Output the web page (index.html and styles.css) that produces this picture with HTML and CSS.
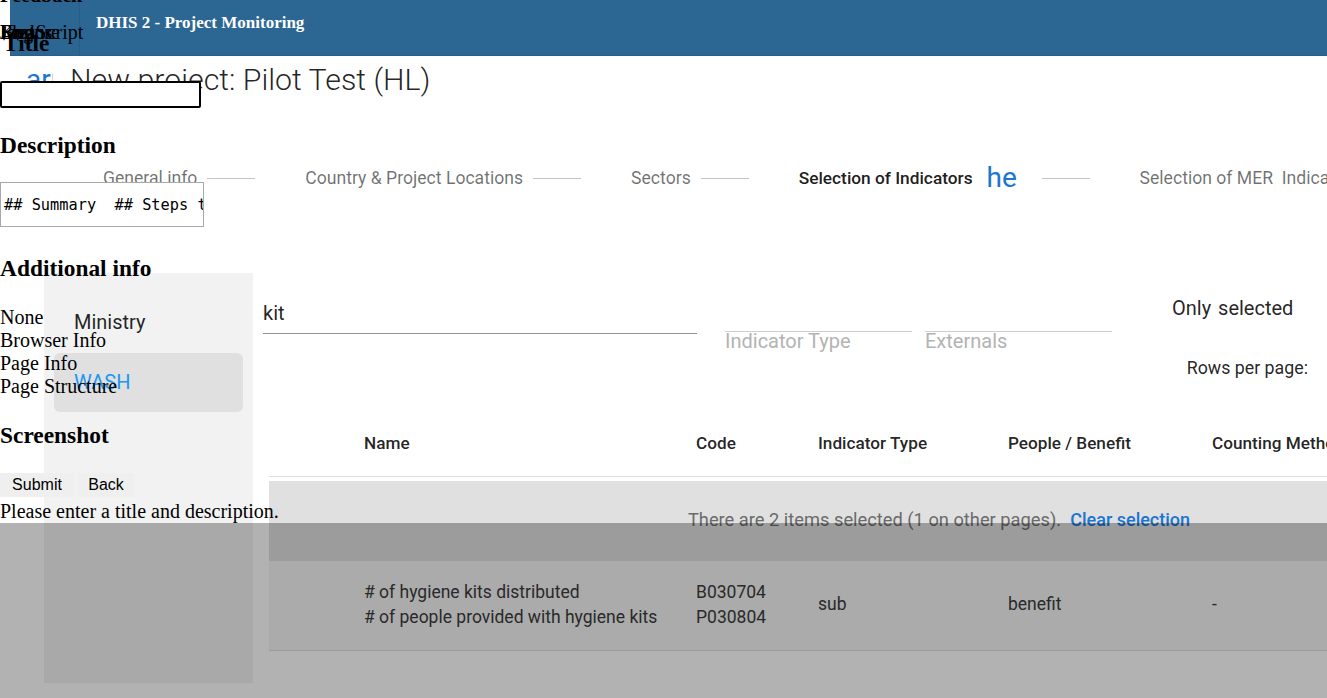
FILE: index.html
```html
<!DOCTYPE html>
<html lang="en">
<head>
<meta charset="utf-8">
<title>DHIS 2 - Project Monitoring</title>
<link rel="stylesheet" href="styles.css">
</head>
<body>
<div class="app">
  <header class="topbar">
    <div class="topbar-menu"></div>
    <div class="topbar-title">DHIS 2 - Project Monitoring</div>
  </header>

  <div class="page-head">
    <span class="icon-clip back"><span>arrow_back</span></span>
    <h1 class="page-title">New project: Pilot Test (HL)</h1>
  </div>

  <nav class="stepper">
    <span class="step">General info</span><span class="connector"></span>
    <span class="step">Country &amp; Project Locations</span><span class="connector"></span>
    <span class="step">Sectors</span><span class="connector"></span>
    <span class="step active">Selection of Indicators</span><span class="help-wrap"><span class="icon-clip help"><span>help</span></span></span><span class="connector"></span>
    <span class="step">Selection of MER&nbsp; Indicators</span>
  </nav>

  <div class="content">
    <aside class="sectors">
      <div class="sector">Ministry</div>
      <div class="sector selected">WASH</div>
    </aside>

    <main class="indicators">
      <div class="filters">
        <div class="search">kit</div>
        <div class="select">Indicator Type</div>
        <div class="select externals">Externals</div>
        <div class="only-selected">Only&nbsp; selected</div>
      </div>
      <div class="pagination">Rows per page:</div>

      <div class="table">
        <div class="row-grid thead">
          <div class="cell check"></div>
          <div class="cell">Name</div>
          <div class="cell">Code</div>
          <div class="cell">Indicator Type</div>
          <div class="cell">People / Benefit</div>
          <div class="cell">Counting Method</div>
        </div>
        <div class="selection-bar">There are 2 items selected (1 on other pages).&nbsp; <span class="clear">Clear selection</span></div>
        <div class="row-grid trow">
          <div class="cell check"></div>
          <div class="cell"># of hygiene kits distributed<br># of people provided with hygiene kits</div>
          <div class="cell">B030704<br>P030804</div>
          <div class="cell">sub</div>
          <div class="cell">benefit</div>
          <div class="cell">-</div>
        </div>
      </div>
    </main>
  </div>
</div>

<form class="feedback">
  <div class="fb-legend">Feedback</div>
  <div class="fb-kinds">
    <span>Bug</span>
    <span>Idea</span>
    <span>Kudos</span>
    <span>Feature</span>
    <span>JavaScript</span>
  </div>
  <h3 class="fb-h fb-title">Title</h3>
  <input class="fb-title-input" type="text" value="">
  <h3 class="fb-h fb-desc-h">Description</h3>
  <textarea class="fb-desc" wrap="off">## Summary  ## Steps to reproduce</textarea>
  <h3 class="fb-h fb-add">Additional info</h3>
  <div class="fb-options">
    <div>None</div>
    <div>Browser Info</div>
    <div>Page Info</div>
    <div>Page Structure</div>
  </div>
  <h3 class="fb-h fb-shot">Screenshot</h3>
  <div class="fb-actions">
    <button type="button" class="fb-btn submit">Submit</button>
    <button type="button" class="fb-btn back">Back</button>
  </div>
  <div class="fb-msg">Please enter a title and description.</div>
  <div class="fb-backdrop"></div>
</form>
</body>
</html>
```

FILE: styles.css
```css
* { box-sizing: border-box; }

html, body {
  margin: 0;
  padding: 0;
}

body {
  width: 1327px;
  height: 698px;
  overflow: hidden;
  position: relative;
  background: #fff;
  font-family: Roboto, "Noto Sans", sans-serif;
  color: rgba(0, 0, 0, 0.87);
}

/* ---------- header ---------- */
.topbar {
  display: flex;
  height: 55px;
  margin-left: 10px;
  background: #2c6693;
  box-shadow: 0 1px 0 #2a6088;
}

.topbar-menu {
  width: 70px;
  border-right: 1px solid #285d85;
}

.topbar-title {
  padding-left: 16px;
  line-height: 46px;
  font-family: "Liberation Serif", "Times New Roman", serif;
  font-weight: bold;
  font-size: 17px;
  color: #fff;
  white-space: nowrap;
}

/* ---------- page heading ---------- */
.page-head {
  display: flex;
  align-items: flex-start;
  margin-top: 7px;
  padding-left: 26px;
}

.icon-clip {
  display: inline-block;
  overflow: hidden;
  white-space: nowrap;
  color: #1976d2;
  font-size: 28px;
}

.icon-clip.back {
  width: 27px;
  height: 36px;
  line-height: 36px;
}

.page-title {
  margin: 0 0 0 17px;
  font-size: 30.3px;
  font-weight: 300;
  line-height: 36px;
  white-space: nowrap;
}

/* ---------- stepper ---------- */
.stepper {
  display: flex;
  align-items: center;
  height: 24px;
  margin-top: 68px;
  padding-left: 103px;
  font-size: 17.6px;
  line-height: 24px;
  white-space: nowrap;
}

.step {
  color: rgba(0, 0, 0, 0.56);
  flex: none;
}

.step.active {
  color: rgba(0, 0, 0, 0.9);
  font-weight: 500;
  font-size: 17.3px;
}

.connector {
  flex: none;
  width: 48px;
  height: 1px;
  margin: 0 50px 0 10px;
  background: #c4c4c4;
}

.help-wrap {
  flex: none;
  width: 45px;
  margin-left: 14px;
  display: flex;
  align-items: center;
}

.icon-clip.help {
  width: 30px;
  height: 34px;
  line-height: 34px;
}

/* ---------- content ---------- */
.content {
  display: flex;
  align-items: flex-start;
  margin-top: 83px;
}

.sectors {
  flex: none;
  width: 209px;
  height: 410px;
  margin-left: 44px;
  padding: 20px 10px 0;
  background: #f2f2f2;
}

.sector {
  height: 59px;
  line-height: 58px;
  padding-left: 20px;
  font-size: 20px;
  border-radius: 6px;
  color: rgba(0, 0, 0, 0.87);
}

.sector.selected {
  margin-top: 1px;
  background: #e0e0e0;
  color: #2196f3;
}

.indicators {
  flex: 1;
  min-width: 0;
  margin-left: 10px;
  padding-right: 19px;
}

.filters {
  display: flex;
  align-items: flex-start;
  white-space: nowrap;
}

.search {
  width: 434px;
  padding-top: 28px;
  padding-bottom: 8px;
  line-height: 24px;
  font-size: 20px;
  border-bottom: 1px solid #949494;
}

.select {
  width: 187px;
  margin-left: 28px;
  margin-top: 58px;
  border-top: 1px solid #cdcdcd;
  font-size: 20px;
  line-height: 18px;
  color: #b3b3b3;
}

.select.externals {
  margin-left: 13px;
}

.only-selected {
  margin-left: 60px;
  margin-top: 23px;
  font-size: 20px;
  line-height: 24px;
  word-spacing: -1.5px;
  color: rgba(0, 0, 0, 0.87);
}

.pagination {
  margin-top: 5px;
  line-height: 26px;
  font-size: 17.8px;
  text-align: right;
  color: rgba(0, 0, 0, 0.87);
}

/* ---------- table ---------- */
.table {
  width: 1340px;
  margin-top: 30px;
  margin-left: 6px;
  font-size: 17.5px;
}

.row-grid {
  display: grid;
  grid-template-columns: 75px 332px 122px 190px 204px 417px;
  align-items: center;
}

.cell {
  padding-left: 20px;
  white-space: nowrap;
}

.cell.check {
  padding-left: 0;
}

.thead {
  height: 66px;
  padding-bottom: 2px;
  border-bottom: 1px solid #e0e0e0;
  font-weight: 500;
  font-size: 17.2px;
  color: rgba(0, 0, 0, 0.87);
}

.selection-bar {
  margin-top: 4px;
  height: 80px;
  line-height: 78px;
  background: #e0e0e0;
  text-align: center;
  font-size: 18.3px;
  color: #6b6b6b;
  white-space: nowrap;
}

.clear {
  color: #1976d2;
  font-weight: 500;
  font-size: 18px;
}

.trow {
  height: 90px;
  padding-bottom: 2px;
  background: #f5f5f5;
  border-bottom: 1px solid #e0e0e0;
  line-height: 25px;
  color: #3c3c3c;
}

/* ---------- feedback form overlay ---------- */
.feedback {
  position: absolute;
  top: 0;
  left: 0;
  width: 100%;
  z-index: 10;
  margin: 0;
  font-family: "Liberation Serif", "Times New Roman", serif;
  font-size: 20px;
  line-height: 23px;
  color: #000;
}

.fb-legend {
  margin-top: -16px;
  height: 23px;
  font-weight: bold;
}

.fb-kinds {
  position: relative;
  height: 0;
}

.fb-kinds span {
  position: absolute;
  left: 0;
  top: 13.5px;
  white-space: nowrap;
}

.fb-h {
  margin: 0;
  font-size: 23.4px;
  line-height: 27px;
  font-weight: bold;
}

.fb-title {
  margin-top: 22.5px;
  padding-left: 3px;
}

.fb-title-input {
  display: block;
  width: 201px;
  height: 27px;
  margin: 24.5px 0 0;
  border: 2px solid #000;
  border-radius: 2px;
  background: #fff;
  padding: 0 3px;
}

.fb-desc-h {
  margin-top: 23.5px;
}

.fb-desc {
  display: block;
  width: 204px;
  height: 45px;
  margin: 23.5px 0 0;
  padding: 13px 3px 0;
  border: 1px solid #a9a9a9;
  background: #fff;
  font-family: "DejaVu Sans Mono", "Liberation Mono", monospace;
  font-size: 15.3px;
  line-height: 18px;
  color: #000;
  resize: none;
  overflow: hidden;
  white-space: pre;
}

.fb-add {
  margin-top: 27.5px;
}

.fb-options {
  margin-top: 24.5px;
}

.fb-shot {
  margin-top: 23.5px;
}

.fb-actions {
  display: flex;
  gap: 4px;
  margin-top: 24.5px;
}

.fb-btn {
  height: 24px;
  padding: 0;
  border: 0;
  background: #efefef;
  font-family: "Liberation Sans", Arial, sans-serif;
  font-size: 16px;
  color: #000;
}

.fb-btn.submit { width: 74px; }
.fb-btn.back { width: 56px; }

.fb-msg {
  margin-top: 2.5px;
}

.fb-backdrop {
  height: 200px;
  background: rgba(0, 0, 0, 0.3);
}
```
